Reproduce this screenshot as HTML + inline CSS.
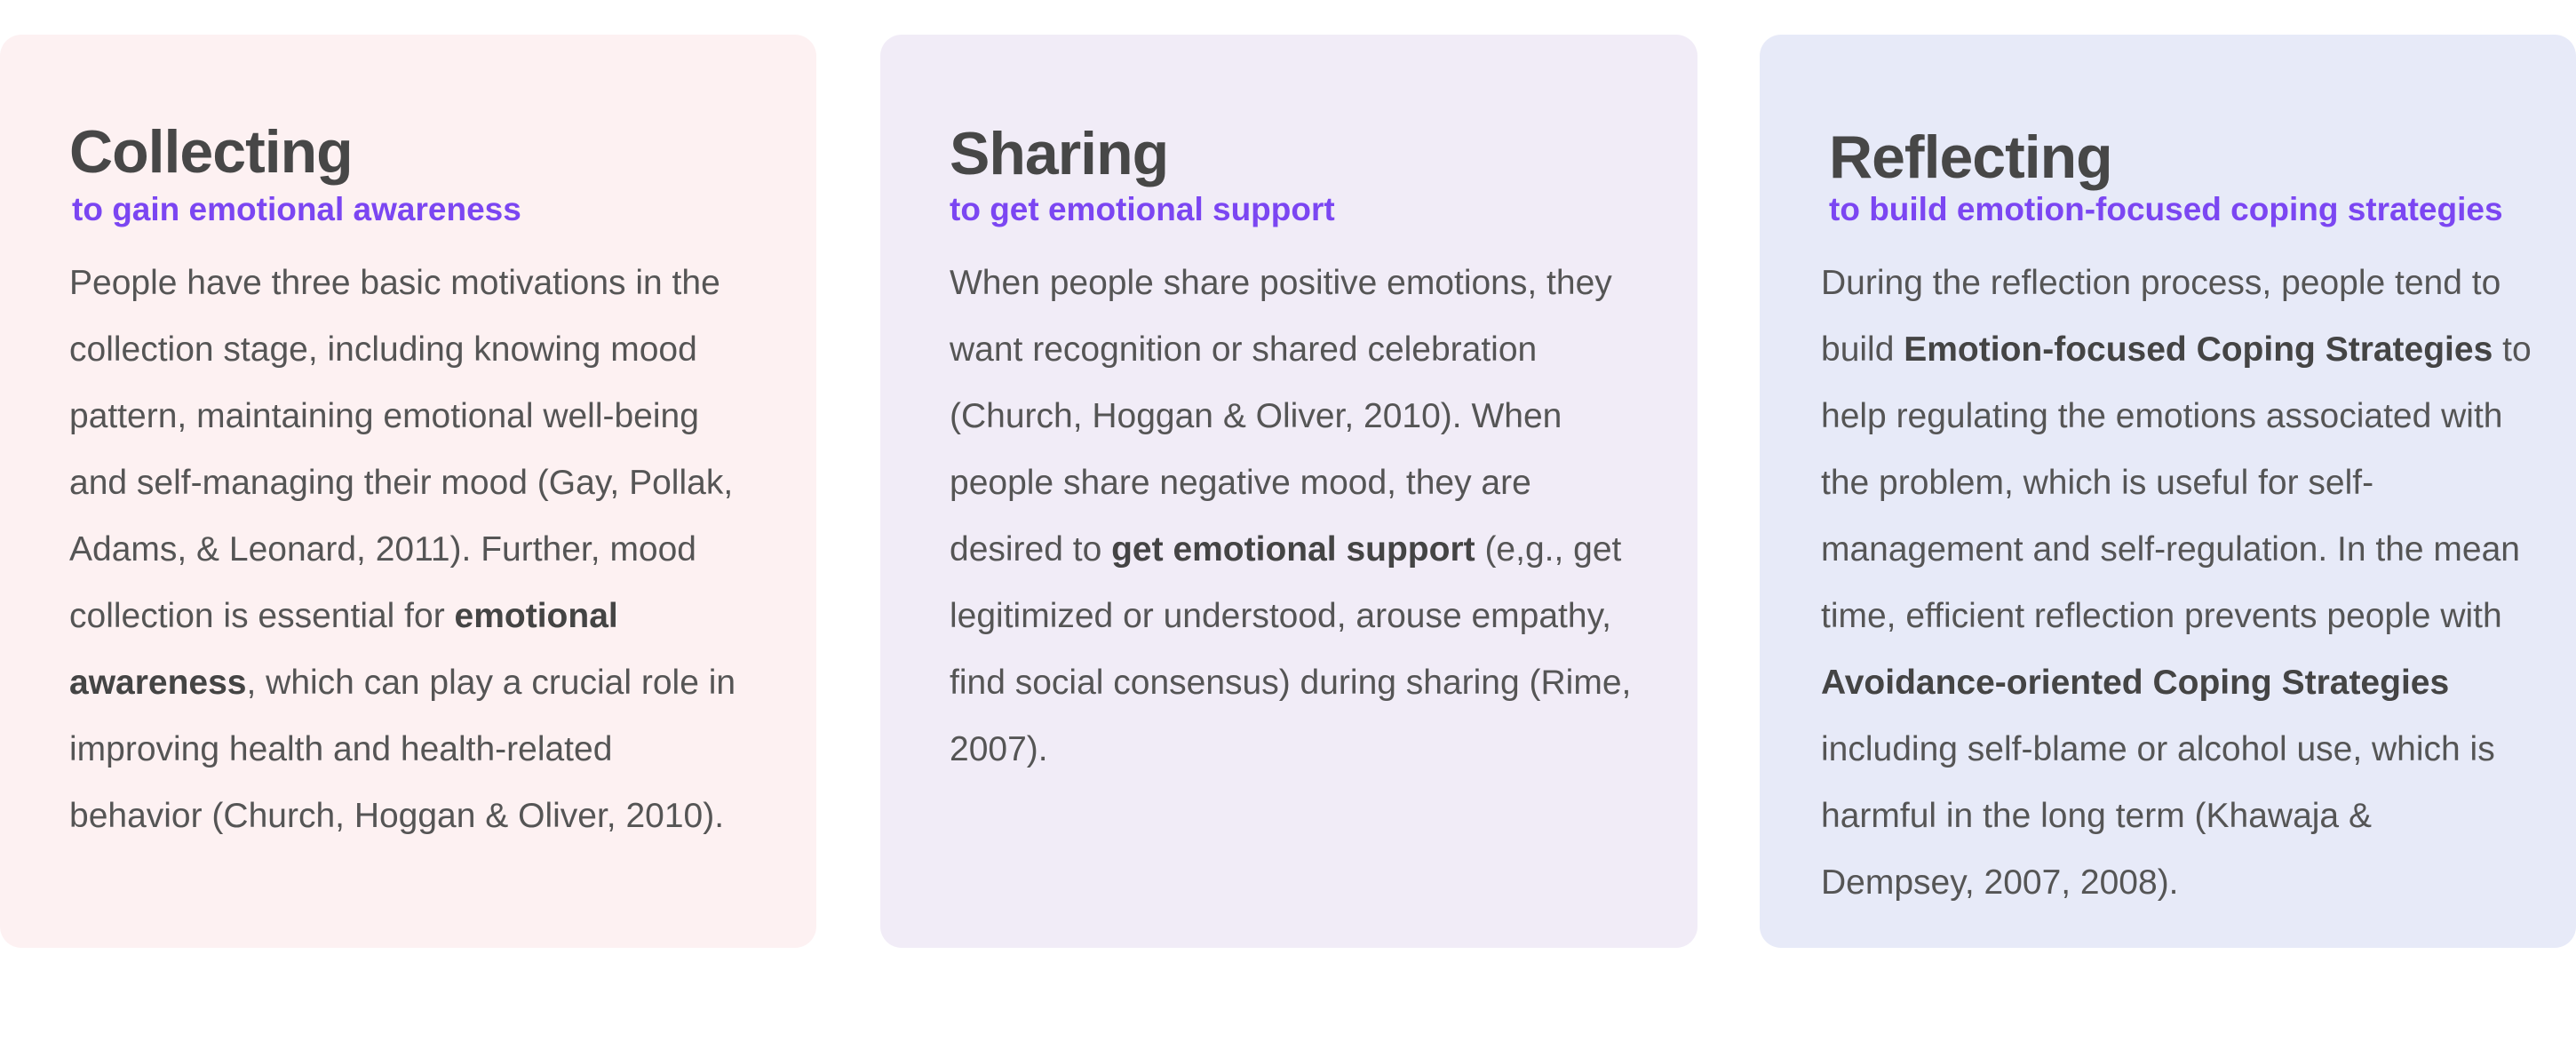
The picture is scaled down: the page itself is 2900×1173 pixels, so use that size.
<!DOCTYPE html>
<html><head><meta charset="utf-8"><style>
*{margin:0;padding:0;box-sizing:border-box}
body{width:2900px;height:1173px;background:#fff;position:relative;overflow:hidden;font-family:"Liberation Sans",sans-serif;color:#4a4a4a}
.card{position:absolute;top:39px;height:1028px;border-radius:24px}
.h{position:absolute;font-size:68px;font-weight:bold;color:#474747;white-space:nowrap;letter-spacing:-1px}
.s{position:absolute;font-size:37px;font-weight:bold;color:#7b46f2;white-space:nowrap}
.b{position:absolute;font-size:39px;line-height:75px;white-space:nowrap;color:#555}
.b b{color:#444}
</style></head><body>
<div class="card" style="left:0;width:919px;background:#fdf1f2"></div>
<div class="card" style="left:991px;width:920px;background:#f1ecf7"></div>
<div class="card" style="left:1981px;width:919px;background:#e7eaf8"></div>

<div class="h" style="left:78px;top:132px">Collecting</div>
<div class="s" style="left:81px;top:215px">to gain emotional awareness</div>
<div class="b" style="left:78px;top:281px">People have three basic motivations in the<br>collection stage, including knowing mood<br>pattern, maintaining emotional well-being<br>and self-managing their mood (Gay, Pollak,<br>Adams, &amp; Leonard, 2011). Further, mood<br>collection is essential for <b>emotional</b><br><b>awareness</b>, which can play a crucial role in<br>improving health and health-related<br>behavior (Church, Hoggan &amp; Oliver, 2010).</div>

<div class="h" style="left:1069px;top:134px">Sharing</div>
<div class="s" style="left:1069px;top:215px">to get emotional support</div>
<div class="b" style="left:1069px;top:281px">When people share positive emotions, they<br>want recognition or shared celebration<br>(Church, Hoggan &amp; Oliver, 2010). When<br>people share negative mood, they are<br>desired to <b>get emotional support</b> (e,g., get<br>legitimized or understood, arouse empathy,<br>find social consensus) during sharing (Rime,<br>2007).</div>

<div class="h" style="left:2059px;top:138px">Reflecting</div>
<div class="s" style="left:2059px;top:215px">to build emotion-focused coping strategies</div>
<div class="b" style="left:2050px;top:281px">During the reflection process, people tend to<br>build <b>Emotion-focused Coping Strategies</b> to<br>help regulating the emotions associated with<br>the problem, which is useful for self-<br>management and self-regulation. In the mean<br>time, efficient reflection prevents people with<br><b>Avoidance-oriented Coping Strategies</b><br>including self-blame or alcohol use, which is<br>harmful in the long term (Khawaja &amp;<br>Dempsey, 2007, 2008).</div>
</body></html>
